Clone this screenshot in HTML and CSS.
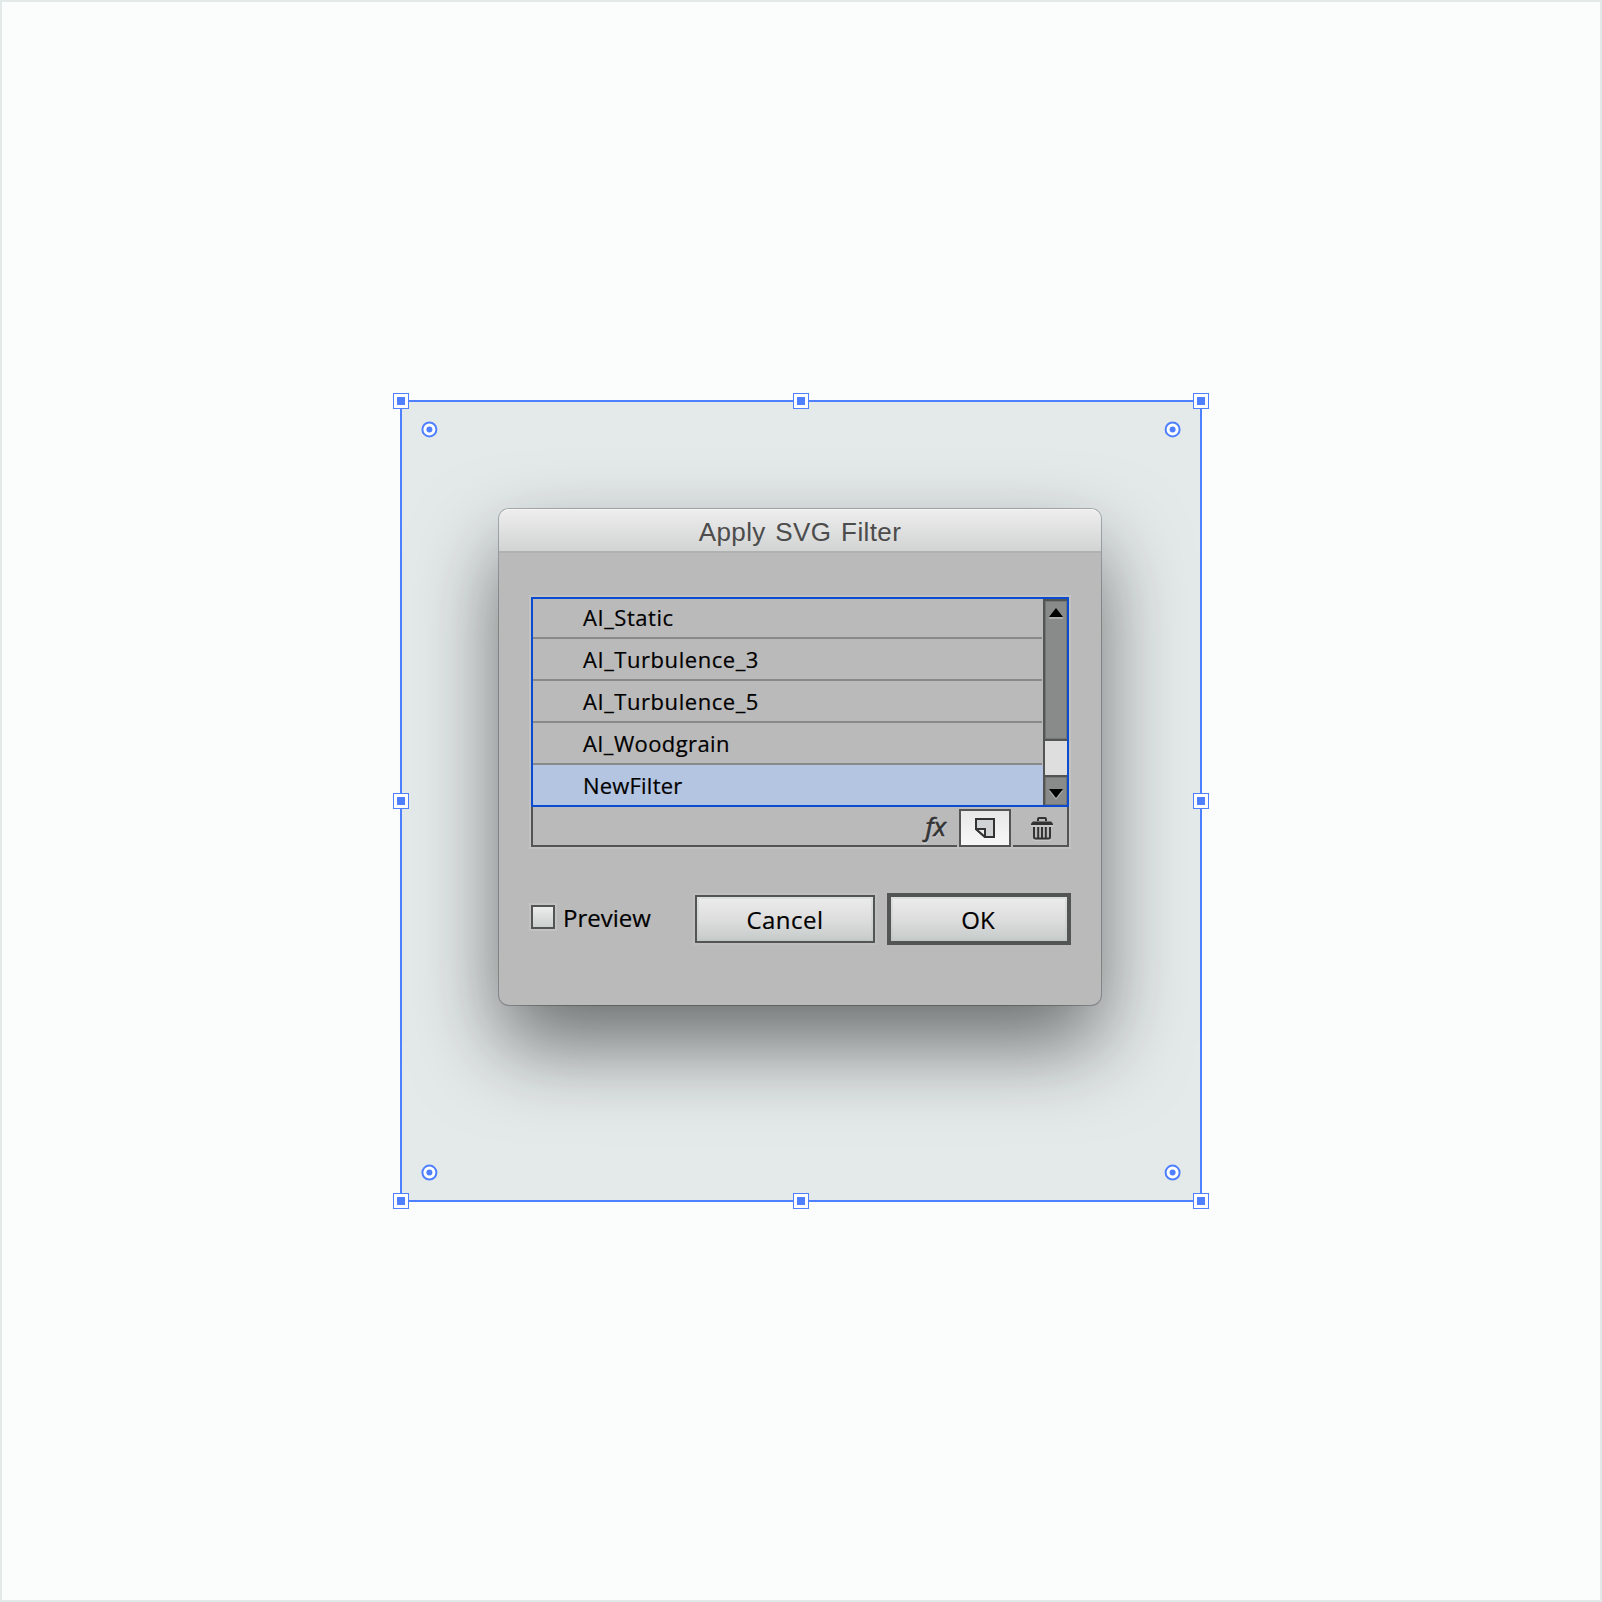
FILE: index.html
```html
<!DOCTYPE html>
<html lang="en">
<head>
<meta charset="utf-8">
<title>Apply SVG Filter</title>
<link rel="stylesheet" href="styles.css">
</head>
<body>
<main class="canvas">
  <div class="shape">
    <i class="handle top left"></i><i class="handle top center"></i><i class="handle top right"></i>
    <i class="handle middle left"></i><i class="handle middle right"></i>
    <i class="handle bottom left"></i><i class="handle bottom center"></i><i class="handle bottom right"></i>
    <svg class="radius r-top r-left" viewBox="0 0 18 18"><circle class="ring" cx="9" cy="9" r="7"/><circle class="dot" cx="9" cy="9" r="3"/></svg>
    <svg class="radius r-top r-right" viewBox="0 0 18 18"><circle class="ring" cx="9" cy="9" r="7"/><circle class="dot" cx="9" cy="9" r="3"/></svg>
    <svg class="radius r-bottom r-left" viewBox="0 0 18 18"><circle class="ring" cx="9" cy="9" r="7"/><circle class="dot" cx="9" cy="9" r="3"/></svg>
    <svg class="radius r-bottom r-right" viewBox="0 0 18 18"><circle class="ring" cx="9" cy="9" r="7"/><circle class="dot" cx="9" cy="9" r="3"/></svg>
  </div>
  <section class="dialog">
    <header class="titlebar"><span class="title">Apply SVG Filter</span></header>
    <div class="body">
      <div class="panel">
        <div class="list">
          <ul class="rows">
            <li class="row">AI_Static</li>
            <li class="row">AI_Turbulence_3</li>
            <li class="row">AI_Turbulence_5</li>
            <li class="row woodgrain">AI_Woodgrain</li>
            <li class="row selected">NewFilter</li>
          </ul>
          <div class="scrollbar">
            <div class="track"><svg class="arrow" width="14" height="11" viewBox="0 0 14 11"><path d="M0 10h14" stroke="#aaacab" stroke-width="2"/><path d="M7 0l7 9H0z"/></svg></div>
            <div class="thumb"></div>
            <div class="down"><svg class="arrow" width="14" height="11" viewBox="0 0 14 11"><path d="M0 2h14L7 11z" fill="#aaacab"/><path d="M0 0h14L7 9z"/></svg></div>
          </div>
        </div>
        <div class="tools">
          <div class="tool-left"><span class="fx">fx</span></div>
          <button class="new" aria-label="New filter">
            <svg width="20" height="20" viewBox="0 0 20 20"><path d="M1 1h18v18h-9L1 11z" fill="#cfd3d3" stroke="#333" stroke-width="2"/><path d="M1 11h9v8z" fill="#eee" stroke="#333" stroke-width="2"/></svg>
          </button>
          <div class="tool-right">
            <svg width="22" height="24" viewBox="0 0 22 24"><path d="M0 8h22M3 11v10q0 2 2 2h12q2 0 2-2V11M7.500 11v10M11 11v10M14.500 11v10" transform="translate(0 1)" fill="none" stroke="#c8c8c8" stroke-width="2"/><path d="M7 4V2q0-1 1-1h6q1 0 1 1v2" fill="none" stroke="#333" stroke-width="2"/><path d="M2 4.500h18l2 2v1.500H0V6.500z" fill="#333"/><path d="M3 10v10q0 1.500 1.500 1.500h13q1.500 0 1.500-1.500V10M7.200 10v11M11 10v11M14.800 10v11" fill="none" stroke="#333" stroke-width="2"/></svg>
          </div>
        </div>
      </div>
      <div class="actions">
        <label class="preview"><i class="check"></i><span>Preview</span></label>
        <button class="btn cancel"><span>Cancel</span></button>
        <button class="btn ok"><span>OK</span></button>
      </div>
    </div>
  </section>
</main>
</body>
</html>
```
FILE: styles.css
```css
* { box-sizing: border-box; }
body { margin: 0; }
.canvas {
  position: relative; width: 1602px; height: 1602px; overflow: hidden;
  background: #fbfdfc; border: 2px solid #e3e8e8;
  font-family: "Open Sans", "Noto Sans", sans-serif; color: #000;
}
.shape {
  position: absolute; left: 398px; top: 398px; width: 802px; height: 802px;
  background: #e4e9e9; border: 2px solid #4f80ff;
}
.handle {
  position: absolute; width: 16px; height: 16px; border: 1px solid #4f80ff;
  background: #4f80ff; box-shadow: inset 0 0 0 3px #fff;
}
.top { top: -9px; } .middle { top: 391px; } .bottom { bottom: -9px; }
.left { left: -9px; } .center { left: 391px; } .right { right: -9px; }
.radius { position: absolute; width: 18px; height: 18px; }
.ring { fill: #fff; stroke: #4f80ff; stroke-width: 2; }
.dot { fill: #4f80ff; }
.r-top { top: 18px; } .r-bottom { bottom: 18px; }
.r-left { left: 18px; } .r-right { right: 18px; }
.r-top.r-left { transform: translate(.4px, .4px); }
.r-top.r-right { transform: translate(-.4px, .4px); }
.r-bottom.r-left { transform: translate(.4px, -.4px); }
.r-bottom.r-right { transform: translate(-.4px, -.4px); }

.dialog {
  position: absolute; left: 497px; top: 507px; width: 602px; height: 496px;
  border-radius: 10px; background: #bababa;
  box-shadow: 0 0 0 1px rgba(0,0,0,.24), 0 40px 84px rgba(0,0,0,.53);
}
.titlebar {
  height: 44px; border-radius: 10px 10px 0 0;
  background: linear-gradient(#eee, #d2d3d3);
  box-shadow: inset 0 1px 0 #f5f5f5; border-bottom: 2px solid #b0b2b1;
  display: flex; justify-content: center;
}
.title {
  font: 26px/46px "Liberation Sans", sans-serif; color: #4c4c4c;
  letter-spacing: .4px; word-spacing: 2px;
}
.body { padding: 44px 30px 0 32px; }
.panel { width: 538px; box-shadow: 0 0 0 2px #c2c2c2; }
.list { display: flex; height: 210px; border: 2px solid #0b4bd0; }
.rows { list-style: none; margin: 0; padding: 0; width: 509px; }
.row {
  height: 42px; padding-left: 50px; border-bottom: 2px solid #888a89;
  font-size: 22px; line-height: 40px; white-space: nowrap; letter-spacing: .55px;
  -webkit-text-stroke: .2px;
}
.row:first-child { height: 40px; line-height: 37px; }
.row.woodgrain { letter-spacing: .4px; }
.row.selected { height: 40px; border: 0; background: #b4c5e1; margin-right: -1px; letter-spacing: .2px; }
.scrollbar {
  width: 24px; margin-left: 1px; border-left: 2px solid #535554;
  display: flex; flex-direction: column;
}
.track, .down { display: flex; justify-content: center; background: #888b89; box-shadow: inset 0 0 0 1px #737675; }
.track { height: 142px; border: solid #535554; border-width: 2px 0; padding-top: 7px; }
.thumb { height: 34px; background: #dedede; }
.down { flex: 1; border-top: 2px solid #535554; padding-top: 12px; }
.arrow { display: block; }
.tools { height: 40px; display: flex; gap: 2px; }
.tool-left { width: 426px; border: solid #535554; border-width: 0 0 2px 2px; display: flex; justify-content: flex-end; }
.fx { font: italic 26px/38px "Open Sans", "Noto Sans", sans-serif; -webkit-text-stroke: .6px; color: #333; padding-right: 11px; text-shadow: 0 2px 1px #ccc; }
.new {
  width: 52px; height: 38px; margin-top: 2px; padding: 0; border: 2px solid #535554;
  background: linear-gradient(#e7e7e7, #f8f8f8); display: flex; align-items: center; justify-content: center;
}
.tool-right { flex: 1; border: solid #535554; border-width: 0 2px 2px 0; display: flex; padding: 10px 0 0 18px; }
.actions { display: flex; margin-top: 46px; height: 52px; }
.preview { display: flex; width: 164px; padding-top: 12px; font-size: 24px; line-height: 25px; letter-spacing: 0; -webkit-text-stroke: .2px; }
.preview span { margin-left: 8px; }
.check { width: 24px; height: 24px; border: 2px solid #535554; background: linear-gradient(#ececec, #cbd0cf); box-shadow: 0 0 0 2px #c2c2c2; }
.btn { padding: 0; border: 2px solid #535554; font: 24px/44px "Open Sans", "Noto Sans", sans-serif; letter-spacing: .5px; -webkit-text-stroke: .2px; color: #000; background: linear-gradient(#ececec, #dedede 50%, #c5cbca); box-shadow: inset 0 0 0 2px rgba(190,195,195,.3), 0 0 0 2px #bfbfbf; }
.btn span { position: relative; top: 1px; }
.cancel { width: 180px; height: 48px; margin-top: 2px; }
.ok { width: 184px; height: 52px; margin-left: 12px; border-width: 4px; flex: none; letter-spacing: 0; box-shadow: inset 0 0 0 2px rgba(190,195,195,.3); }
.ok span { left: -1px; }
```
